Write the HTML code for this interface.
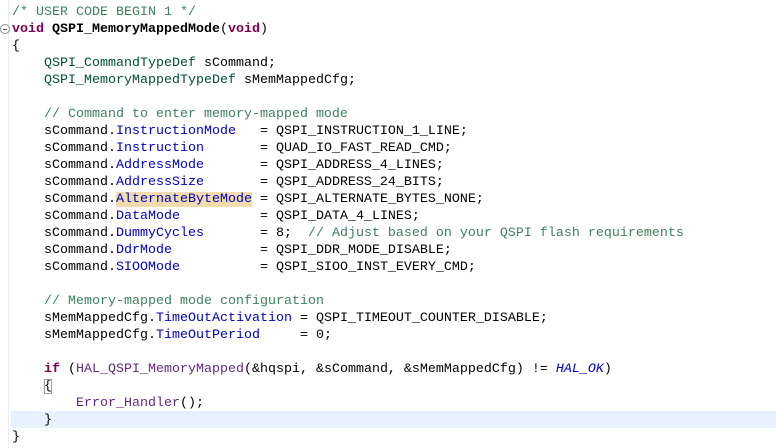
<!DOCTYPE html>
<html><head><meta charset="utf-8"><style>
html,body{margin:0;padding:0;background:#fff;width:776px;height:448px;overflow:hidden;position:relative}
.gut{position:absolute;left:8px;top:0;width:1px;height:448px;background:#ececec}
.hl{position:absolute;left:11px;top:411px;width:765px;height:17px;background:#e8f2fe}
pre{position:absolute;left:12px;top:4px;margin:0;font-family:"Liberation Mono",monospace;font-size:13.33px;line-height:17px;color:#000}
.c{color:#3f7f5f}.k{color:#7f0055;font-weight:bold}.t{color:#005032}.f{color:#0000c0}.m{color:#642880}.i{color:#0000c0;font-style:italic}
.y{background:#f0dcaf}
.bx{outline:1px solid #a0a0a0;outline-offset:-1px}
.fold{position:absolute;left:0px;top:24px;width:8px;height:8px;border:1px solid #8a8a8a;border-radius:50%;background:#fff}
.fold:after{content:"";position:absolute;left:2px;top:3.5px;width:4px;height:1px;background:#555}
</style></head><body>
<div class="gut"></div><div class="hl"></div><div class="fold"></div>
<pre><span class="c">/* USER CODE BEGIN 1 */</span>
<span class="k">void</span> <b>QSPI_MemoryMappedMode</b>(<span class="k">void</span>)
{
    <span class="t">QSPI_CommandTypeDef</span> sCommand;
    <span class="t">QSPI_MemoryMappedTypeDef</span> sMemMappedCfg;

    <span class="c">// Command to enter memory-mapped mode</span>
    sCommand.<span class="f">InstructionMode</span>   = QSPI_INSTRUCTION_1_LINE;
    sCommand.<span class="f">Instruction</span>       = QUAD_IO_FAST_READ_CMD;
    sCommand.<span class="f">AddressMode</span>       = QSPI_ADDRESS_4_LINES;
    sCommand.<span class="f">AddressSize</span>       = QSPI_ADDRESS_24_BITS;
    sCommand.<span class="f y">AlternateByteMode</span> = QSPI_ALTERNATE_BYTES_NONE;
    sCommand.<span class="f">DataMode</span>          = QSPI_DATA_4_LINES;
    sCommand.<span class="f">DummyCycles</span>       = 8;  <span class="c">// Adjust based on your QSPI flash requirements</span>
    sCommand.<span class="f">DdrMode</span>           = QSPI_DDR_MODE_DISABLE;
    sCommand.<span class="f">SIOOMode</span>          = QSPI_SIOO_INST_EVERY_CMD;

    <span class="c">// Memory-mapped mode configuration</span>
    sMemMappedCfg.<span class="f">TimeOutActivation</span> = QSPI_TIMEOUT_COUNTER_DISABLE;
    sMemMappedCfg.<span class="f">TimeOutPeriod</span>     = 0;

    <span class="k">if</span> (<span class="m">HAL_QSPI_MemoryMapped</span>(&amp;hqspi, &amp;sCommand, &amp;sMemMappedCfg) != <span class="i">HAL_OK</span>)
    <span class="bx">{</span>
        <span class="m">Error_Handler</span>();
    }
}</pre>
</body></html>
